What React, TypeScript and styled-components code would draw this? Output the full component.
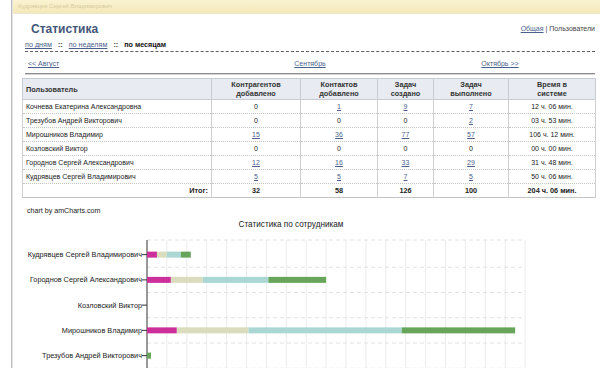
import styled, { createGlobalStyle } from "styled-components";

type Row = {
  name: string;
  contragents: number;
  contacts: number;
  created: number;
  done: number;
  time: string;
};

const rows: Row[] = [
  { name: "Кочнева Екатерина Александровна", contragents: 0, contacts: 1, created: 9, done: 7, time: "12 ч. 06 мин." },
  { name: "Трезубов Андрей Викторович", contragents: 0, contacts: 0, created: 0, done: 2, time: "03 ч. 53 мин." },
  { name: "Мирошников Владимир", contragents: 15, contacts: 36, created: 77, done: 57, time: "106 ч. 12 мин." },
  { name: "Козловский Виктор", contragents: 0, contacts: 0, created: 0, done: 0, time: "00 ч. 00 мин." },
  { name: "Городнов Сергей Александрович", contragents: 12, contacts: 16, created: 33, done: 29, time: "31 ч. 48 мин." },
  { name: "Кудрявцев Сергей Владимирович", contragents: 5, contacts: 5, created: 7, done: 5, time: "50 ч. 06 мин." },
];

// цвета серий: контрагенты, контакты, задачи создано, задачи выполнено
const colors = ["#cc2e9a", "#d9dcbd", "#aad6d4", "#67a55a"];

const GlobalStyle = createGlobalStyle`
  html, body {
    margin: 0;
    padding: 0;
    background: #fff;
  }
  body {
    font-family: "Liberation Sans", Arial, sans-serif;
    font-size: 7px;
    color: #222;
  }
`;

const Page = styled.div`
  display: flex;
  width: 600px;
  height: 368px;
  overflow: hidden;
`;

const Strip = styled.div`
  width: 11px;
  flex: none;
  background-color: #fff;
  background-image: radial-gradient(#dfe4ea 0.6px, transparent 0.7px);
  background-size: 2px 2px;
  border-right: 1px solid #bdbdbd;
  box-shadow: 1px 0 0 #e4e4e4;
`;

const Main = styled.div`
  flex: 1;
  min-width: 0;
  display: flex;
  flex-direction: column;
  margin-left: 1px;
`;

const TopBar = styled.div`
  height: 13px;
  background: linear-gradient(#faf3d2, #f3e8b8);
  border-bottom: 1px solid #ebe6cf;
  color: #d6cc9e;
  font-size: 6px;
  line-height: 13px;
  padding-left: 5px;
`;

const Content = styled.div`
  padding: 7px 5px 0 9px;
`;

const HeadRow = styled.div`
  display: flex;
  justify-content: space-between;
  align-items: flex-start;
`;

const Title = styled.h1`
  margin: 0 0 0 9px;
  font-size: 12px;
  line-height: 16px;
  font-weight: bold;
  color: #44567a;
`;

const Switch = styled.div`
  margin-top: 2px;
  font-size: 7px;
  line-height: 12px;
`;

const A = styled.a<{ $bold?: boolean }>`
  color: #4b5f8c;
  text-decoration: underline;
  font-weight: ${(p) => (p.$bold ? "bold" : "normal")};
`;

const Plain = styled.span<{ $bold?: boolean }>`
  color: ${(p) => (p.$bold ? "#111" : "#444")};
  font-weight: ${(p) => (p.$bold ? "bold" : "normal")};
`;

const Periods = styled.div`
  margin: 2px 0 0 3px;
  font-size: 7.2px;
  line-height: 12px;
  border-bottom: 1px dashed #5e5e5e;
  display: flex;
  gap: 6px;
`;

const Sep = styled.span`
  color: #333;
  font-weight: bold;
`;

const MonthNav = styled.div`
  margin-left: 3px;
  display: grid;
  grid-template-columns: 1fr 1fr 1fr;
  padding: 6px 0 3px;
  line-height: 12px;
  border-bottom: 1px solid #8e8e8e;
  box-shadow: 0 1px 0 #d4d4d4;
`;

const NavCell = styled.div<{ $align: "left" | "center" }>`
  text-align: ${(p) => p.$align};
  padding-left: ${(p) => (p.$align === "left" ? "3px" : "0")};
  font-size: 7px;
`;

const Table = styled.table`
  margin-top: 4px;
  width: 573px;
  border-collapse: collapse;
  table-layout: fixed;
  border: 1px solid #c3c3c3;
`;

const Th = styled.th<{ $w: number; $left?: boolean }>`
  box-sizing: border-box;
  width: ${(p) => p.$w}px;
  height: 21px;
  padding: 0 3px;
  background: #e8ecf2;
  border: 1px solid #c8ccd2;
  font-size: 7.3px;
  line-height: 9px;
  font-weight: bold;
  color: #333;
  text-align: ${(p) => (p.$left ? "left" : "center")};
`;

const Td = styled.td<{ $left?: boolean; $right?: boolean; $bold?: boolean }>`
  height: 13px;
  padding: 0 3px;
  border-left: 1px solid #d0d0d0;
  border-right: 1px solid #d0d0d0;
  border-bottom: 1px dotted #c4c4c4;
  font-size: ${(p) => (p.$bold ? "7.3px" : "7px")};
  line-height: 13px;
  color: #222;
  font-weight: ${(p) => (p.$bold ? "bold" : "normal")};
  text-align: ${(p) => (p.$left ? "left" : p.$right ? "right" : "center")};
  white-space: nowrap;
  overflow: hidden;
`;

const Chart = styled.svg`
  display: block;
  margin: 2px 0 0 0;
  font-family: "Liberation Sans", Arial, sans-serif;
`;

function Num({ v }: { v: number }) {
  return v > 0 ? <A href="#">{v}</A> : <>{v}</>;
}

// на экране видны только первые пять строк графика
const chartRows = [...rows].reverse().slice(0, 5);
const axisX = 147;
const top = 242;
const band = 25.25;
const unit = 1.99;

function StaffChart() {
  const grid = Array.from({ length: 20 }, (_, i) => axisX + i * 19.9);
  const bands = Array.from({ length: 7 }, (_, i) => top + i * band);
  return (
    <Chart width={573} height={168} viewBox="22 200 573 168">
      <text x={27} y={212.5} fontSize={7.1} fill="#222">
        chart by amCharts.com
      </text>
      <text x={291} y={226.5} fontSize={8.2} fill="#222" textAnchor="middle">
        Статистика по сотрудникам
      </text>
      {grid.slice(1).map((x) => (
        <line key={x} x1={x} y1={top - 2} x2={x} y2={368} stroke="#ececec" strokeWidth={1} />
      ))}
      {bands.map((y, i) => (
        <line
          key={y}
          x1={axisX}
          y1={i === 0 ? top - 2 : y}
          x2={grid[19]}
          y2={i === 0 ? top - 2 : y}
          stroke="#e2e2e2"
          strokeDasharray="4 3"
        />
      ))}
      <line x1={axisX} y1={top - 2} x2={axisX} y2={368} stroke="#333" strokeWidth={1} />
      {chartRows.map((r, i) => {
        const cy = top + band * i + band / 2;
        const values = [r.contragents, r.contacts, r.created, r.done];
        let x = axisX;
        return (
          <g key={r.name}>
            <text x={142} y={cy + 2.5} fontSize={7.3} fill="#1a1a1a" textAnchor="end">
              {r.name}
            </text>
            <line x1={142} y1={cy} x2={axisX} y2={cy} stroke="#333" />
            {values.map((v, k) => {
              const w = v * unit;
              const rect = (
                <rect key={k} x={x} y={cy - 3} width={w} height={6} fill={colors[k]} />
              );
              x += w;
              return v > 0 ? rect : null;
            })}
          </g>
        );
      })}
    </Chart>
  );
}

export default function App() {
  const total = rows.reduce(
    (acc, r) => ({
      contragents: acc.contragents + r.contragents,
      contacts: acc.contacts + r.contacts,
      created: acc.created + r.created,
      done: acc.done + r.done,
    }),
    { contragents: 0, contacts: 0, created: 0, done: 0 }
  );

  return (
    <>
      <GlobalStyle />
      <Page>
        <Strip />
        <Main>
          <TopBar>Кудрявцев Сергей Владимирович</TopBar>
          <Content>
            <HeadRow>
              <Title>Статистика</Title>
              <Switch>
                <A href="#">Общая</A> <Plain>|</Plain> <Plain>Пользователи</Plain>
              </Switch>
            </HeadRow>
            <Periods>
              <A href="#">по дням</A>
              <Sep>::</Sep>
              <A href="#">по неделям</A>
              <Sep>::</Sep>
              <Plain $bold>по месяцам</Plain>
            </Periods>
            <MonthNav>
              <NavCell $align="left">
                <A href="#">&lt;&lt; Август</A>
              </NavCell>
              <NavCell $align="center">
                <A href="#">Сентябрь</A>
              </NavCell>
              <NavCell $align="center">
                <A href="#">Октябрь &gt;&gt;</A>
              </NavCell>
            </MonthNav>
            <Table>
              <thead>
                <tr>
                  <Th $w={189} $left>Пользователь</Th>
                  <Th $w={89}>Контрагентов<br />добавлено</Th>
                  <Th $w={77}>Контактов<br />добавлено</Th>
                  <Th $w={56}>Задач<br />создано</Th>
                  <Th $w={75}>Задач<br />выполнено</Th>
                  <Th $w={87}>Время в<br />системе</Th>
                </tr>
              </thead>
              <tbody>
                {rows.map((r) => (
                  <tr key={r.name}>
                    <Td $left>{r.name}</Td>
                    <Td><Num v={r.contragents} /></Td>
                    <Td><Num v={r.contacts} /></Td>
                    <Td><Num v={r.created} /></Td>
                    <Td><Num v={r.done} /></Td>
                    <Td>{r.time}</Td>
                  </tr>
                ))}
                <tr>
                  <Td $right $bold>Итог:</Td>
                  <Td $bold>{total.contragents}</Td>
                  <Td $bold>{total.contacts}</Td>
                  <Td $bold>{total.created}</Td>
                  <Td $bold>{total.done}</Td>
                  <Td $bold>204 ч. 06 мин.</Td>
                </tr>
              </tbody>
            </Table>
            <StaffChart />
          </Content>
        </Main>
      </Page>
    </>
  );
}
